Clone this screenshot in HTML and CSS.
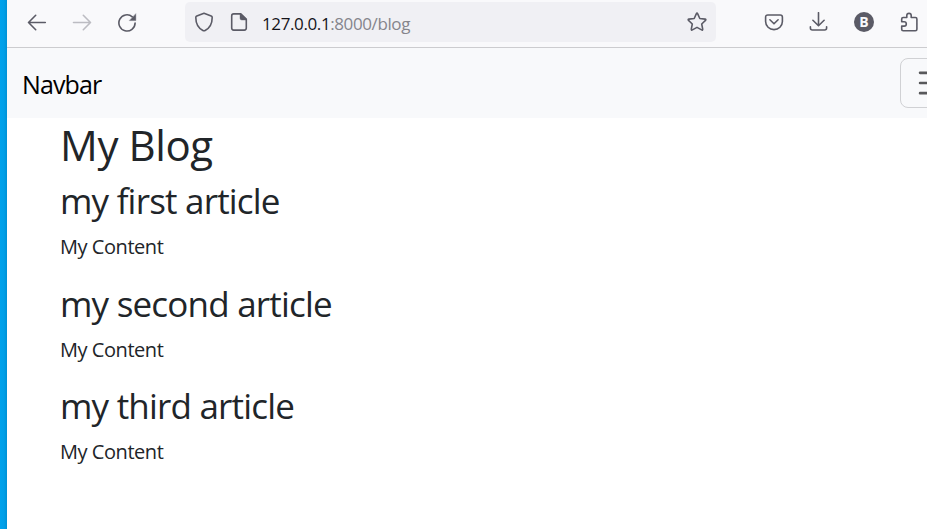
FILE: index.html
```html
<!DOCTYPE html>
<html lang="en">
<head>
<meta charset="utf-8">
<title>My Blog</title>
<link rel="stylesheet" href="styles.css">
</head>
<body>
<div class="window">
  <header class="toolbar">
    <div class="history">
      <svg class="icon" viewBox="0 0 20 20"><path d="M18.3 10.5H1.5M8.7 3.3 1.5 10.5l7.2 7.2"/></svg>
      <svg class="icon disabled" viewBox="0 0 20 20"><path d="M1.5 10.5h17M11.3 3.3l7.2 7.2-7.2 7.2"/></svg>
      <svg class="icon" viewBox="0 0 20 20"><path d="M15.3 4.8A8.1 8.1 0 1 0 18.1 11"/><path class="solid" d="M18.8 2v6.6h-6.2z"/></svg>
    </div>
    <div class="address">
      <svg class="icon shield" viewBox="0 0 20 20"><path d="M10 1.2 17.2 4q1 .4 1 1.4C18.2 12 15.6 16 11.1 18.5q-1.1.6-2.2 0C4.4 16 1.8 12 1.8 5.4q0-1 1-1.4z"/></svg>
      <svg class="icon" viewBox="0 0 20 20"><path d="M11.8 1.9H4.7q-2 0-2 2v12.2q0 2 2 2h10.6q2 0 2-2V7.3z"/><path class="solid" d="M11 1.5v4.7q0 1.8 1.8 1.8h4.7V7z"/></svg>
      <span class="url"><b>127.0.0.1</b><span>:8000/blog</span></span>
      <svg class="icon star" viewBox="0 0 20 20"><path d="M9.3 1.8q.7-1.4 1.4 0l2.1 4.7 5.2.6q1.4.3.5 1.3l-3.8 3.6 1 5.1q.1 1.4-1.1.8L10 15.4l-4.6 2.5q-1.2.6-1.1-.8l1-5.1-3.8-3.6q-.9-1 .5-1.3l5.2-.6z"/></svg>
    </div>
    <div class="actions">
      <svg class="icon" viewBox="0 0 20 20"><path d="M3.8 3h12.4q2.2 0 2.2 2.2v4.3a8.4 8.1 0 0 1-16.8 0V5.2Q1.6 3 3.8 3z"/><path d="m5.9 7.8 4.1 4 4.1-4"/></svg>
      <svg class="icon" viewBox="0 0 20 20"><path d="M9.5.7v13M3.9 8.3l5.6 5.5 5.6-5.5M1.4 14.7V16q0 2 2 2h12.2q2 0 2-2v-1.3"/></svg>
      <span class="badge">B</span>
      <svg class="icon" viewBox="0 0 20 20"><path d="M2.7 7q0-1.5 1.5-1.5h3.6V3.6a2.2 2.2 0 0 1 4.4 0v1.9h4.2q1.5 0 1.5 1.5v10.2q0 1.5-1.5 1.5H4.2q-1.5 0-1.5-1.5v-3.1h2.4a2.2 2.2 0 0 0 0-4.4H2.7z"/></svg>
    </div>
  </header>
  <nav class="navbar">
    <a class="brand">Navbar</a>
    <button class="toggler" aria-label="Toggle navigation">
      <svg viewBox="0 0 30 30"><path d="M4 7h22M4 15h22M4 23h22"/></svg>
    </button>
  </nav>
  <main class="container">
    <h1>My Blog</h1>
    <article><h2>my first article</h2><p>My Content</p></article>
    <article><h2>my second article</h2><p>My Content</p></article>
    <article><h2>my third article</h2><p>My Content</p></article>
  </main>
</div>
</body>
</html>
```
FILE: styles.css
```css
* { box-sizing: border-box; }
body {
  margin: 0;
  height: 529px;
  overflow: hidden;
  display: flex;
  background: linear-gradient(90deg, #00a2ec 0, #009fe8 4px, #0091d5 7px);
  font-family: "Open Sans", "Noto Sans", sans-serif;
  color: #212529;
}
.window { flex: 1; min-width: 0; margin-left: 7px; background: #fff; overflow: hidden; }
.toolbar {
  display: flex;
  height: 48px;
  padding-top: 2px;
  background: #f9f9fb;
  border-bottom: 1px solid #cccccf;
}
.history, .actions { display: flex; align-items: center; gap: 25px; height: 40px; flex: none; }
.history { width: 178px; padding-left: 20px; }
.actions { padding-left: 48px; }
.icon { width: 20px; height: 20px; flex: none; fill: none; stroke: #5b5b66; stroke-width: 1.6; stroke-linecap: round; stroke-linejoin: round; }
.icon .solid { fill: #5b5b66; stroke-width: .4; }
.icon.disabled { stroke: #bcbcc2; }
.address {
  display: flex;
  align-items: center;
  width: 531px;
  height: 40px;
  padding: 0 9px;
  flex: none;
  background: #f0f0f4;
  border-radius: 5px;
}
.shield { margin-right: 15px; }
.url { flex: 1; margin-left: 13px; padding-top: 3px; font-size: 17px; line-height: 24px; color: #85858c; letter-spacing: -.39px; }
.url b { font-weight: 400; color: #15141a; }
.badge { display: flex; align-items: center; justify-content: center; width: 20px; height: 20px; border-radius: 50%; background: #5b5b66; color: #f9f9fb; font: 700 14px/20px "Open Sans", sans-serif; }
.navbar { display: flex; align-items: center; justify-content: space-between; height: 70px; padding-left: 15px; background: #f8f9fb; }
.brand { padding-top: 2px; font-size: 25px; line-height: 38px; color: #000; letter-spacing: -.9px; }
.toggler { display: flex; align-items: center; width: 72px; height: 50px; margin-right: -45px; padding: 0 14px; border: 1px solid #d0d1d4; border-radius: 8px; background: transparent; flex: none; }
.toggler svg { width: 38px; height: 38px; flex: none; fill: none; stroke: #58595b; stroke-width: 2.1; stroke-linecap: round; }
.container { padding: 2px 0 0 53px; }
h1, h2 { margin: 0 0 10px; font-weight: 400; line-height: 1.2; }
h1 { font-size: 42px; letter-spacing: -.4px; }
h2 { font-size: 35px; letter-spacing: -.8px; }
p { margin: 0 0 20.5px; font-size: 20px; line-height: 30px; letter-spacing: -.45px; }
```
